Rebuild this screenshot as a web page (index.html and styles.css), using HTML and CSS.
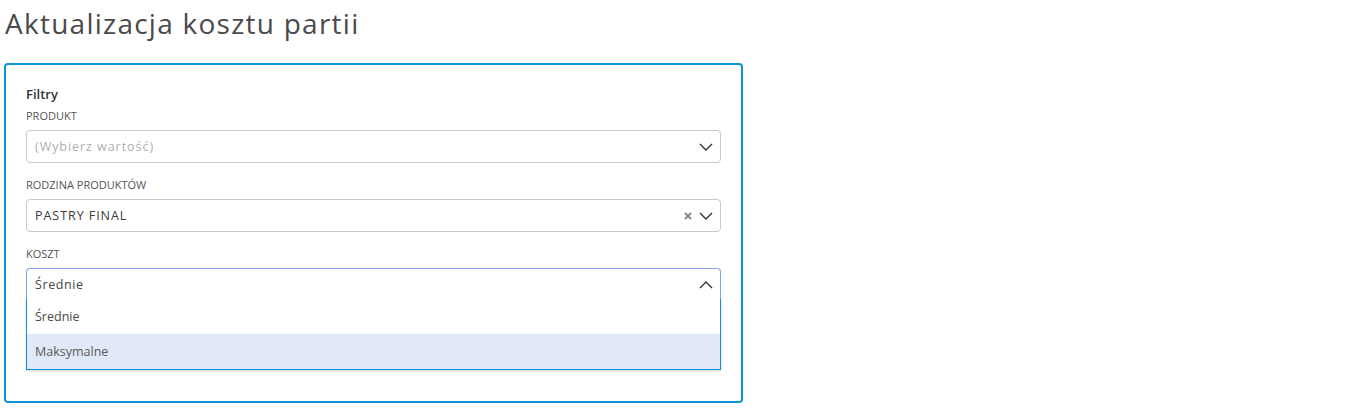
FILE: index.html
```html
<!DOCTYPE html>
<html lang="pl">
<head>
<meta charset="utf-8">
<title>Aktualizacja kosztu partii</title>
<link rel="stylesheet" href="styles.css">
</head>
<body>
<h1 class="page-title">Aktualizacja kosztu partii</h1>
<section class="card">
  <h2 class="card-title">Filtry</h2>

  <div class="field">
    <label class="field-label">PRODUKT</label>
    <div class="select">
      <span class="select-value placeholder">(Wybierz wartość)</span>
      <svg class="chev" viewBox="0 0 14 8" width="14" height="8"><path d="M1 1 L7 7 L13 1" fill="none" stroke="#333" stroke-width="1.4"/></svg>
    </div>
  </div>

  <div class="field">
    <label class="field-label">RODZINA PRODUKTÓW</label>
    <div class="select">
      <span class="select-value">PASTRY FINAL</span>
      <svg class="clear" viewBox="0 0 8 8" width="8" height="8"><path d="M1 1 L7 7 M7 1 L1 7" fill="none" stroke="#8a8a8a" stroke-width="2"/></svg>
      <svg class="chev" viewBox="0 0 14 8" width="14" height="8"><path d="M1 1 L7 7 L13 1" fill="none" stroke="#333" stroke-width="1.4"/></svg>
    </div>
  </div>

  <div class="field">
    <label class="field-label">KOSZT</label>
    <div class="select open">
      <span class="select-value">Średnie</span>
      <svg class="chev" viewBox="0 0 14 8" width="14" height="8"><path d="M1 7 L7 1 L13 7" fill="none" stroke="#333" stroke-width="1.4"/></svg>
      <ul class="menu">
        <li class="option">Średnie</li>
        <li class="option marked">Maksymalne</li>
      </ul>
    </div>
  </div>
</section>
</body>
</html>
```

FILE: styles.css
```css
html, body {
  margin: 0;
  padding: 0;
  background: #ffffff;
}
body {
  padding: 0 4px;
  font-family: "Open Sans", "Noto Sans", sans-serif;
  color: #333;
}
.page-title {
  margin: 0;
  padding-top: 4px;
  height: 63px;
  box-sizing: border-box;
  font-size: 28px;
  font-weight: 400;
  letter-spacing: 1.25px;
  line-height: 38px;
  color: #4a4a4a;
  padding-left: 1px;
}
.card {
  width: 739px;
  box-sizing: border-box;
  border: 2px solid #0c96d5;
  border-radius: 4px;
  padding: 19px 20px 100px 20px;
}
.card-title {
  margin: 0;
  font-size: 13px;
  font-weight: 600;
  line-height: 20px;
  color: #333;
  height: 24px;
}
.field {
  margin-bottom: 14px;
}
.field:last-child {
  margin-bottom: 0;
}
.field-label {
  display: block;
  font-size: 11px;
  line-height: 16px;
  color: #555;
  margin-bottom: 6px;
}
.select {
  position: relative;
  height: 33px;
  box-sizing: border-box;
  border: 1px solid #c9c9c9;
  border-radius: 4px;
  display: flex;
  align-items: center;
  padding: 0 7px 0 8px;
  gap: 6px;
}
.select-value {
  flex: 1;
  font-size: 12.5px;
  letter-spacing: 0.95px;
  color: #3a3a3a;
}
.select-value.placeholder {
  color: #b0b0b0;
}
.clear {
  width: 8px;
  height: 8px;
  margin-right: 1px;
}
.chev {
  width: 14px;
  height: 8px;
}
.select.open {
  border-color: #82a6ee;
  border-bottom-color: transparent;
  border-radius: 4px 4px 0 0;
}
.select.open .select-value {
  letter-spacing: 0.6px;
  color: #444;
}
.menu {
  position: absolute;
  left: -1px;
  right: -1px;
  top: 30px;
  margin: 0;
  padding: 0;
  list-style: none;
  background: #fff;
  border: 1px solid #1390d3;
  border-top: none;
  box-shadow: 0 1px 2px rgba(0, 0, 0, 0.18);
  z-index: 2;
}
.option {
  height: 35px;
  line-height: 35px;
  padding-left: 8px;
  font-size: 12.5px;
  color: #4a4a4a;
}
.option.marked {
  background: #e1e8f8;
  color: #5a5a5a;
}
```
